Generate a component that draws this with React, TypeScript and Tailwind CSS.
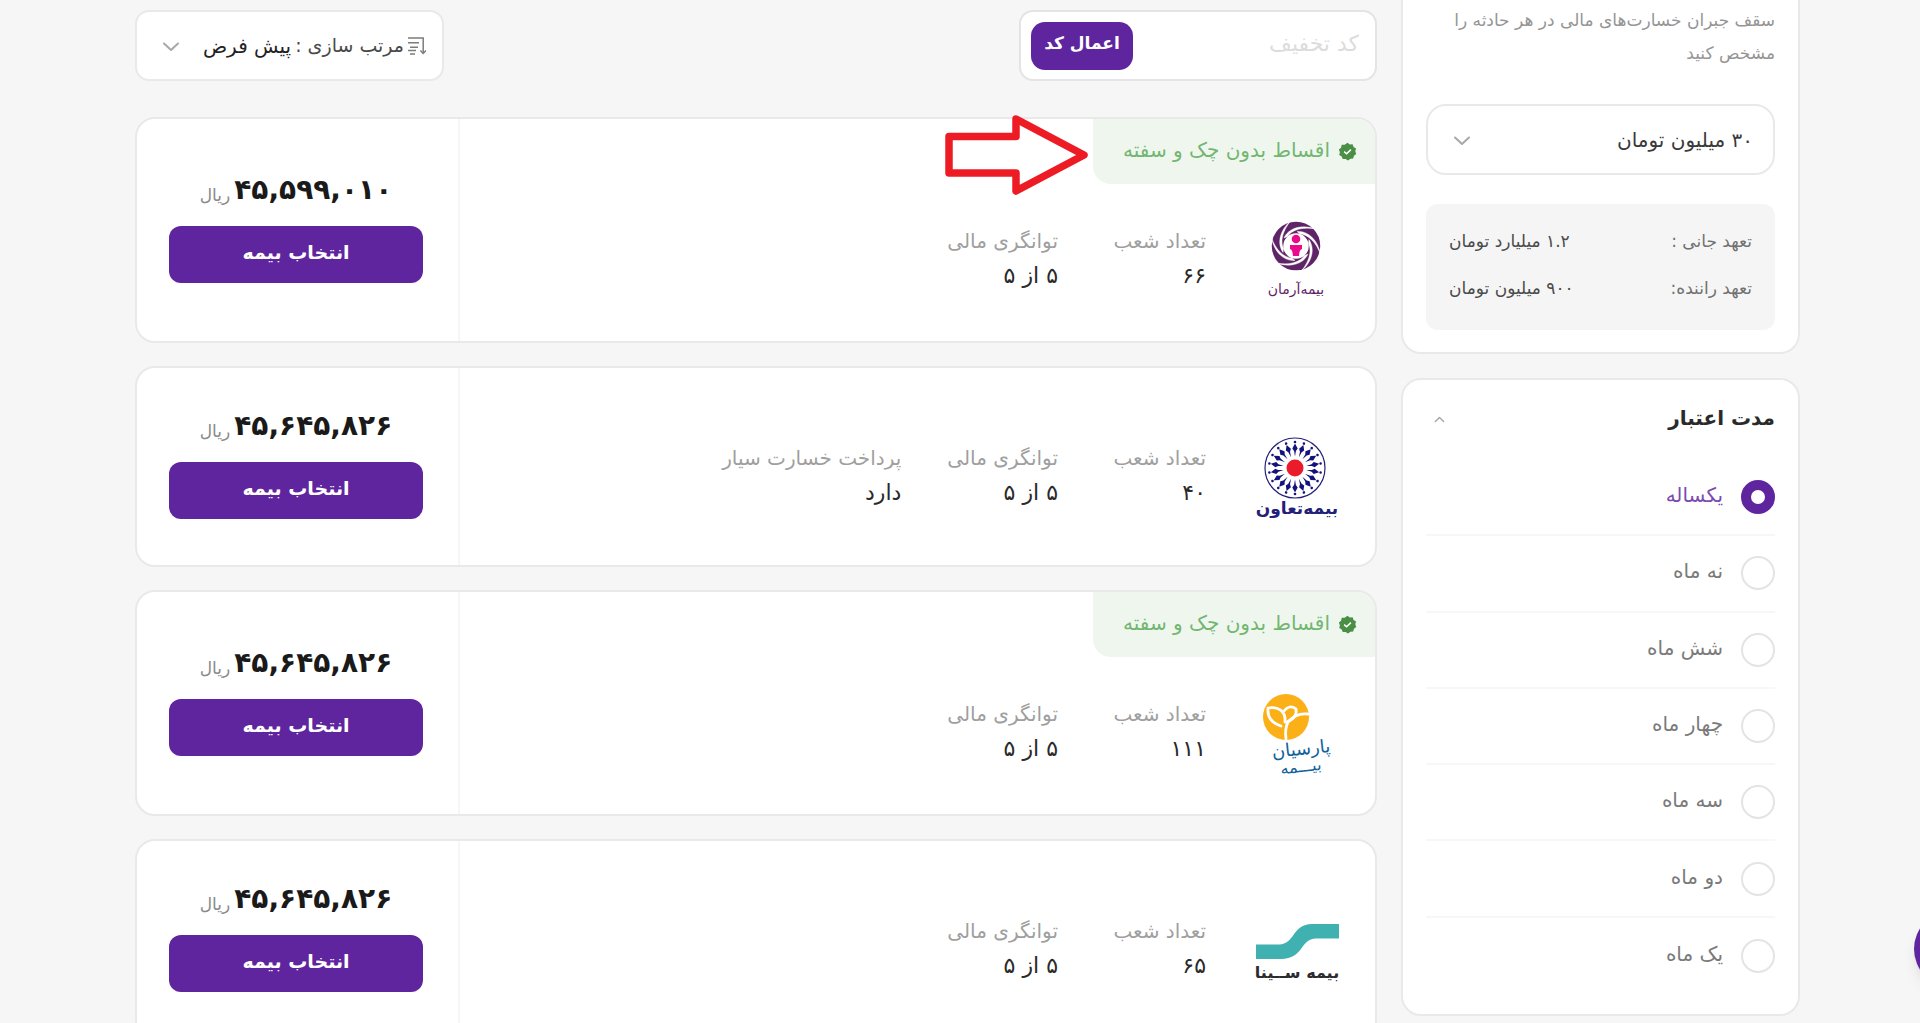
import React, { useState } from "react";

type Feature = { label: string; value: string };
type Offer = {
  name: string;
  price: string;
  installment: boolean;
  features: Feature[];
  logo: React.ReactNode;
};

const logoFont = { fontFamily: '"DejaVu Sans", sans-serif' };

function ArmanLogo() {
  return (
    <svg viewBox="0 0 85 85" className="size-[85px]" role="img" aria-label="بیمه آرمان">
      <g transform="translate(41 26)">
        <circle r="18.5" fill="none" stroke="#5f2468" strokeWidth="11.5" />
        {[0, 60, 120, 180, 240, 300].map((a) => (
          <path
            key={a}
            transform={`rotate(${a})`}
            d="M-12 -8C-8 -17 4 -22.5 20 -17C6 -19.5 -4 -16 -8.5 -9.5Z"
            fill="#fff"
            stroke="#fff"
            strokeWidth="0.4"
          />
        ))}
        <circle cy="-7" r="4.3" fill="#ec0a8c" />
        <path d="M-6 -1H6V3C4 4 3.5 5 3 10H-3C-3.5 5 -4 4 -6 3Z" fill="#ec0a8c" />
      </g>
      <text x="41" y="74" textAnchor="middle" direction="rtl" fontSize="14" fill="#5f2468" style={logoFont}>
        بیمه‌آرمان
      </text>
    </svg>
  );
}

function TaavonLogo() {
  const rays = Array.from({ length: 18 }, (_, i) => i * 20);
  return (
    <svg viewBox="0 0 85 85" className="size-[85px]" role="img" aria-label="بیمه تعاون">
      <g transform="translate(40 31)">
        <circle r="30" fill="none" stroke="#23207a" strokeWidth="1.2" />
        <circle r="8.5" fill="#ea1c2c" />
        {rays.map((a) => (
          <g key={a} transform={`rotate(${a})`} fill="#14127c">
            <circle cy="-26" r="1.3" />
            <path d="M0 -24.5L2.7 -19.5L0.9 -17L0 -11.5L-0.9 -17L-2.7 -19.5Z" />
          </g>
        ))}
      </g>
      <text x="42" y="77" textAnchor="middle" direction="rtl" fontSize="17" fontWeight="700" fill="#23207a" style={logoFont}>
        بیمه‌تعاون
      </text>
    </svg>
  );
}

function ParsianLogo() {
  return (
    <svg viewBox="0 0 85 85" className="size-[85px]" role="img" aria-label="بیمه پارسیان">
      <circle cx="31" cy="24" r="23" fill="#fcb017" />
      <g fill="none" stroke="#fff" strokeWidth="2.8" strokeLinecap="round" strokeLinejoin="round" transform="translate(0 -1)">
        <path d="M26 34C17 31 12 25 13 16C23 14 31 19 30 30" />
        <path d="M29 19C32 15 37 13 41 17C42 22 39 27 32 30" />
        <path d="M31 47C30 40 31 34 33 30C38 24 45 21 53 22" />
      </g>
      <g fill="#10629c" direction="rtl" textAnchor="middle" transform="rotate(-6 46 66)" style={logoFont}>
        <text x="47" y="62" fontSize="18">پارسیان</text>
        <text x="45" y="79" fontSize="16">بیـــمه</text>
      </g>
    </svg>
  );
}

function SinaLogo() {
  return (
    <svg viewBox="0 0 85 85" className="size-[85px]" role="img" aria-label="بیمه سینا">
      <path d="M1 34.5H24C40 34.5 37 14 57 14H84V28.5H61C45 28.5 49 49 26 49H1Z" fill="#3fb1b0" />
      <text x="42" y="68" textAnchor="middle" direction="rtl" fontSize="16" fontWeight="700" fill="#2d2b2e" style={logoFont}>
        بیمه ســینا
      </text>
    </svg>
  );
}

function Chevron({ up = false, className }: { up?: boolean; className: string }) {
  return (
    <svg viewBox="0 0 16 10" fill="none" stroke="currentColor" strokeWidth="2" strokeLinecap="round" strokeLinejoin="round" className={className} aria-hidden="true">
      <path d={up ? "M2 8L8 2L14 8" : "M1 1.5L8 8L15 1.5"} />
    </svg>
  );
}

function SortIcon() {
  return (
    <svg viewBox="0 0 18 18" fill="none" stroke="#7c7c7c" strokeWidth="1.5" className="size-[18px] shrink-0" aria-hidden="true">
      <path d="M0 1H15.2V16M0 5.7H11M2 10.2H10M0 13.5H8M2 17H7" />
      <path d="M12.4 13.5L15.2 16.4L18 13.5" />
    </svg>
  );
}

function VerifiedIcon() {
  return (
    <svg viewBox="0 0 20 20" className="size-[19px] shrink-0" aria-hidden="true">
      <path
        d="M10 .8L12.4 2.6L15.4 2.4L16.4 5.2L19 6.8L18.2 9.8L19.2 12.6L16.8 14.5L16 17.4L13 17.5L10.6 19.4L8 17.9L5 18L3.9 15.2L1.3 13.7L2 10.7L.9 8L3.2 6L3.9 3L7 2.8Z"
        fill="#4a8f45"
      />
      <path d="M6.5 10.2L9 12.4L13.6 8" fill="none" stroke="#fff" strokeWidth="1.6" />
    </svg>
  );
}

const branches = (value: string): Feature => ({ label: "تعداد شعب", value });
const solvency: Feature = { label: "توانگری مالی", value: "۵ از ۵" };

const offers: Offer[] = [
  { name: "آرمان", price: "۴۵,۵۹۹,۰۱۰", installment: true, features: [branches("۶۶"), solvency], logo: <ArmanLogo /> },
  {
    name: "تعاون",
    price: "۴۵,۶۴۵,۸۲۶",
    installment: false,
    features: [branches("۴۰"), solvency, { label: "پرداخت خسارت سیار", value: "دارد" }],
    logo: <TaavonLogo />,
  },
  { name: "پارسیان", price: "۴۵,۶۴۵,۸۲۶", installment: true, features: [branches("۱۱۱"), solvency], logo: <ParsianLogo /> },
  { name: "سینا", price: "۴۵,۶۴۵,۸۲۶", installment: false, features: [branches("۶۵"), solvency], logo: <SinaLogo /> },
];

const durations = ["یکساله", "نه ماه", "شش ماه", "چهار ماه", "سه ماه", "دو ماه", "یک ماه"];

function OfferCard({ offer }: { offer: Offer }) {
  return (
    <article className="flex overflow-hidden rounded-[20px] border-2 border-[#e9e9e9] bg-white">
      <div className="flex flex-1 flex-col">
        {offer.installment && (
          <div className="flex h-[65px] w-[282px] items-center gap-2 rounded-bl-[18px] bg-[#eff6ee] ps-[18px]">
            <VerifiedIcon />
            <span className="pb-1 text-[20px] text-[#72b671]">اقساط بدون چک و سفته</span>
          </div>
        )}
        <div className={offer.installment ? "flex items-center ps-[35px] pt-9 pb-9" : "flex items-center ps-[35px] pt-[69px] pb-[43px]"}>
          {offer.logo}
          <dl className="ms-[49px] flex gap-[46px] pb-2">
            {offer.features.map((f) => (
              <div key={f.label} className="min-w-[102px]">
                <dt className="text-[20px] leading-[34px] text-[#9f9f9f]">{f.label}</dt>
                <dd className="text-[22px] leading-9 text-[#2a2a2a]">{f.value}</dd>
              </div>
            ))}
          </dl>
        </div>
      </div>
      <div className="flex w-[323px] shrink-0 flex-col justify-center border-r-2 border-[#f6f6f6] pr-[35px] pl-8">
        <p className="flex h-12 items-center justify-center gap-1 pb-6">
          <strong className="text-[28px] leading-8 font-bold text-[#1a1a1a]">{offer.price}</strong>
          <span className="pt-3 text-[17px] text-[#8a8a8a]">ریال</span>
        </p>
        <button type="button" className="h-[57px] rounded-xl bg-[#5f259f] pb-1 text-[19px] font-bold text-white">
          انتخاب بیمه
        </button>
      </div>
    </article>
  );
}

export default function App() {
  const [duration, setDuration] = useState(durations[0]);
  return (
    <div dir="rtl" className="relative h-screen overflow-hidden bg-[#f6f6f6] font-['DejaVu_Sans',sans-serif]">
      <div className="flex items-start gap-6 pr-[120px] pl-[135px]">
        <aside className="flex w-[399px] shrink-0 flex-col gap-6">
          <section className="rounded-b-[20px] border-2 border-t-0 border-[#e9e9e9] bg-white px-[23px] pt-1 pb-[22px]">
            <p className="text-[17px] leading-[33px] text-[#959595]">
              سقف جبران خسارت‌های مالی در هر حادثه را
              <br />
              مشخص کنید
            </p>
            <div className="relative mt-[34px]">
              <select aria-label="سقف پوشش مالی" className="h-[71px] w-full appearance-none rounded-[20px] border-2 border-[#e9e9e9] bg-white px-5 text-[20px] text-[#3a3a3a]">
                <option>۳۰ میلیون تومان</option>
              </select>
              <Chevron className="pointer-events-none absolute top-8 left-7 h-[10px] w-4 text-[#a8a8a8]" />
            </div>
            <dl className="mt-[29px] rounded-xl bg-[#f5f5f5] px-[23px] pt-[14px] pb-[18px] text-[17px] leading-[47px]">
              <div className="flex justify-between">
                <dt className="text-[#707070]">تعهد جانی :</dt>
                <dd className="text-[#4a4a4a]">۱.۲ میلیارد تومان</dd>
              </div>
              <div className="flex justify-between">
                <dt className="text-[#707070]">تعهد راننده:</dt>
                <dd className="text-[#4a4a4a]">۹۰۰ میلیون تومان</dd>
              </div>
            </dl>
          </section>

          <section className="rounded-[20px] border-2 border-[#e9e9e9] bg-white px-[23px] pt-5 pb-5">
            <button type="button" className="flex h-[60px] w-full items-start justify-between pl-2 text-[20px] leading-9 font-bold text-[#2a2a2a]">
              مدت اعتبار
              <Chevron up className="mt-4 h-[7px] w-[11px] text-[#a5a5a5]" />
            </button>
            <ul className="grid h-[534px] auto-rows-fr">
              {durations.map((d) => (
                <li key={d} className="border-b-2 border-[#f7f7f7] last:border-b-0">
                  <label className={d === duration ? "flex h-full items-center gap-[18px] text-[20px] text-[#7b4bb0]" : "flex h-full items-center gap-[18px] text-[20px] text-[#7a7a7a]"}>
                    <input
                      type="radio"
                      name="duration"
                      checked={d === duration}
                      onChange={() => setDuration(d)}
                      className="size-[34px] appearance-none rounded-full border-2 border-[#e4e4e4] bg-white checked:border-[10px] checked:border-[#5f259f]"
                    />
                    <span className="pb-1">{d}</span>
                  </label>
                </li>
              ))}
            </ul>
          </section>
        </aside>

        <main className="relative min-w-0 flex-1 pt-[10px]">
          <div className="flex justify-between">
            <form className="flex h-[71px] w-[358px] items-center rounded-[14px] border-2 border-[#e4e4e4] bg-white pr-4 pl-[10px]" onSubmit={(e) => e.preventDefault()}>
              <input aria-label="کد تخفیف" placeholder="کد تخفیف" className="min-w-0 flex-1 pb-1 text-[22px] outline-none placeholder:text-[#dcdcdc]" />
              <button type="submit" className="h-12 w-[102px] rounded-[14px] bg-[#5f259f] pb-1 text-[17px] font-bold text-white">
                اعمال کد
              </button>
            </form>
            <div className="relative flex h-[71px] w-[309px] items-center gap-1 rounded-[14px] border-2 border-[#e9e9e9] bg-white pr-4">
              <SortIcon />
              <label htmlFor="sort" className="shrink-0 text-[19px] text-[#4a4a4a]">
                مرتب سازی :
              </label>
              <select id="sort" className="min-w-0 flex-1 appearance-none bg-transparent text-[20px] text-[#222]">
                <option>پیش فرض</option>
              </select>
              <Chevron className="pointer-events-none absolute top-[30px] left-[26px] h-[10px] w-4 text-[#a8a8a8]" />
            </div>
          </div>

          <div className="mt-9 flex flex-col gap-[23px]">
            {offers.map((o) => (
              <OfferCard key={o.name} offer={o} />
            ))}
          </div>

          <svg viewBox="0 0 144 82" className="pointer-events-none absolute top-[114px] right-[288px] h-[82px] w-36" aria-hidden="true">
            <path d="M4 22.5H71V5L139 41L71 77V59H4Z" fill="none" stroke="#ed1c24" strokeWidth="7.5" strokeLinejoin="round" />
          </svg>
        </main>
      </div>
      <button type="button" aria-label="پشتیبانی" className="absolute -right-[70px] bottom-9 size-[76px] rounded-full bg-[#5f259f] shadow-lg" />
    </div>
  );
}
